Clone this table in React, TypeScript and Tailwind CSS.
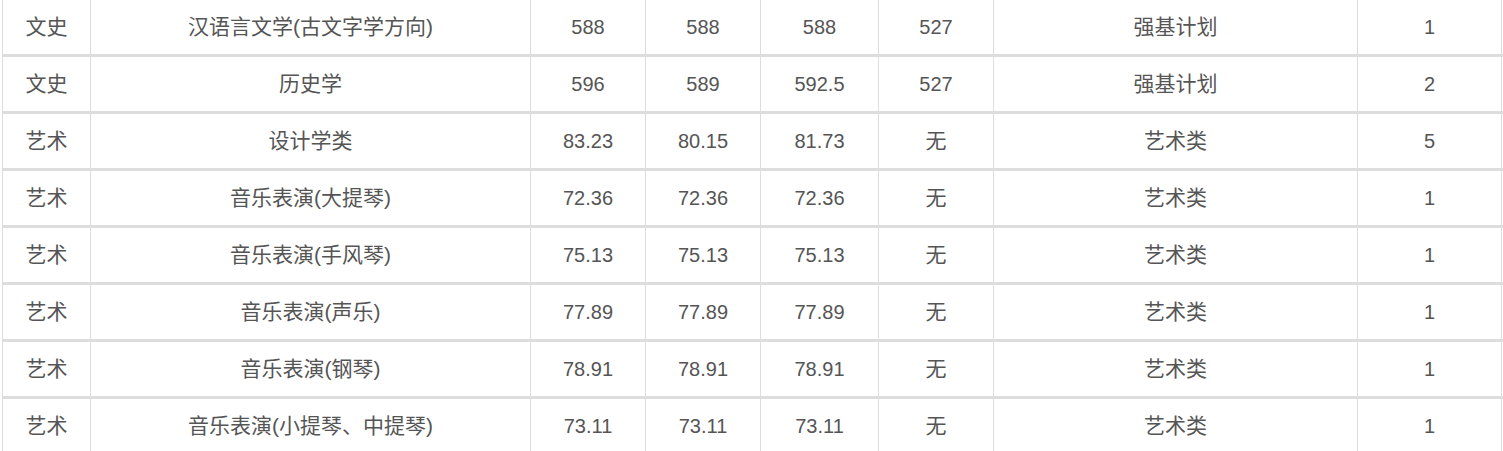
const rows: string[][] = [
  ["文史", "汉语言文学(古文字学方向)", "588", "588", "588", "527", "强基计划", "1"],
  ["文史", "历史学", "596", "589", "592.5", "527", "强基计划", "2"],
  ["艺术", "设计学类", "83.23", "80.15", "81.73", "无", "艺术类", "5"],
  ["艺术", "音乐表演(大提琴)", "72.36", "72.36", "72.36", "无", "艺术类", "1"],
  ["艺术", "音乐表演(手风琴)", "75.13", "75.13", "75.13", "无", "艺术类", "1"],
  ["艺术", "音乐表演(声乐)", "77.89", "77.89", "77.89", "无", "艺术类", "1"],
  ["艺术", "音乐表演(钢琴)", "78.91", "78.91", "78.91", "无", "艺术类", "1"],
  ["艺术", "音乐表演(小提琴、中提琴)", "73.11", "73.11", "73.11", "无", "艺术类", "1"],
];

const App = () => {
  return (
    <div
      className="w-[1503px] h-[451px] overflow-hidden bg-white pl-[2px] text-[20px] text-[#555]"
      style={{ fontFamily: '"Liberation Sans", "Noto Sans CJK SC", sans-serif' }}
    >
      {rows.map((row, i) => (
        <div
          key={i}
          className="grid grid-cols-[88px_440px_115px_115px_118px_115px_364px_145px] h-[57px] border-b-[3px] border-[#dddddd]"
        >
          {row.map((cell, j) => (
            <div
              key={j}
              className={
                "flex items-center justify-center border-l border-[#dddddd] " +
                (j === 7 ? "border-r " : "") +
                (/^[\d.]+$/.test(cell) ? "" : "text-[21px]")
              }
            >
              {cell}
            </div>
          ))}
        </div>
      ))}
    </div>
  );
};

export default App;
